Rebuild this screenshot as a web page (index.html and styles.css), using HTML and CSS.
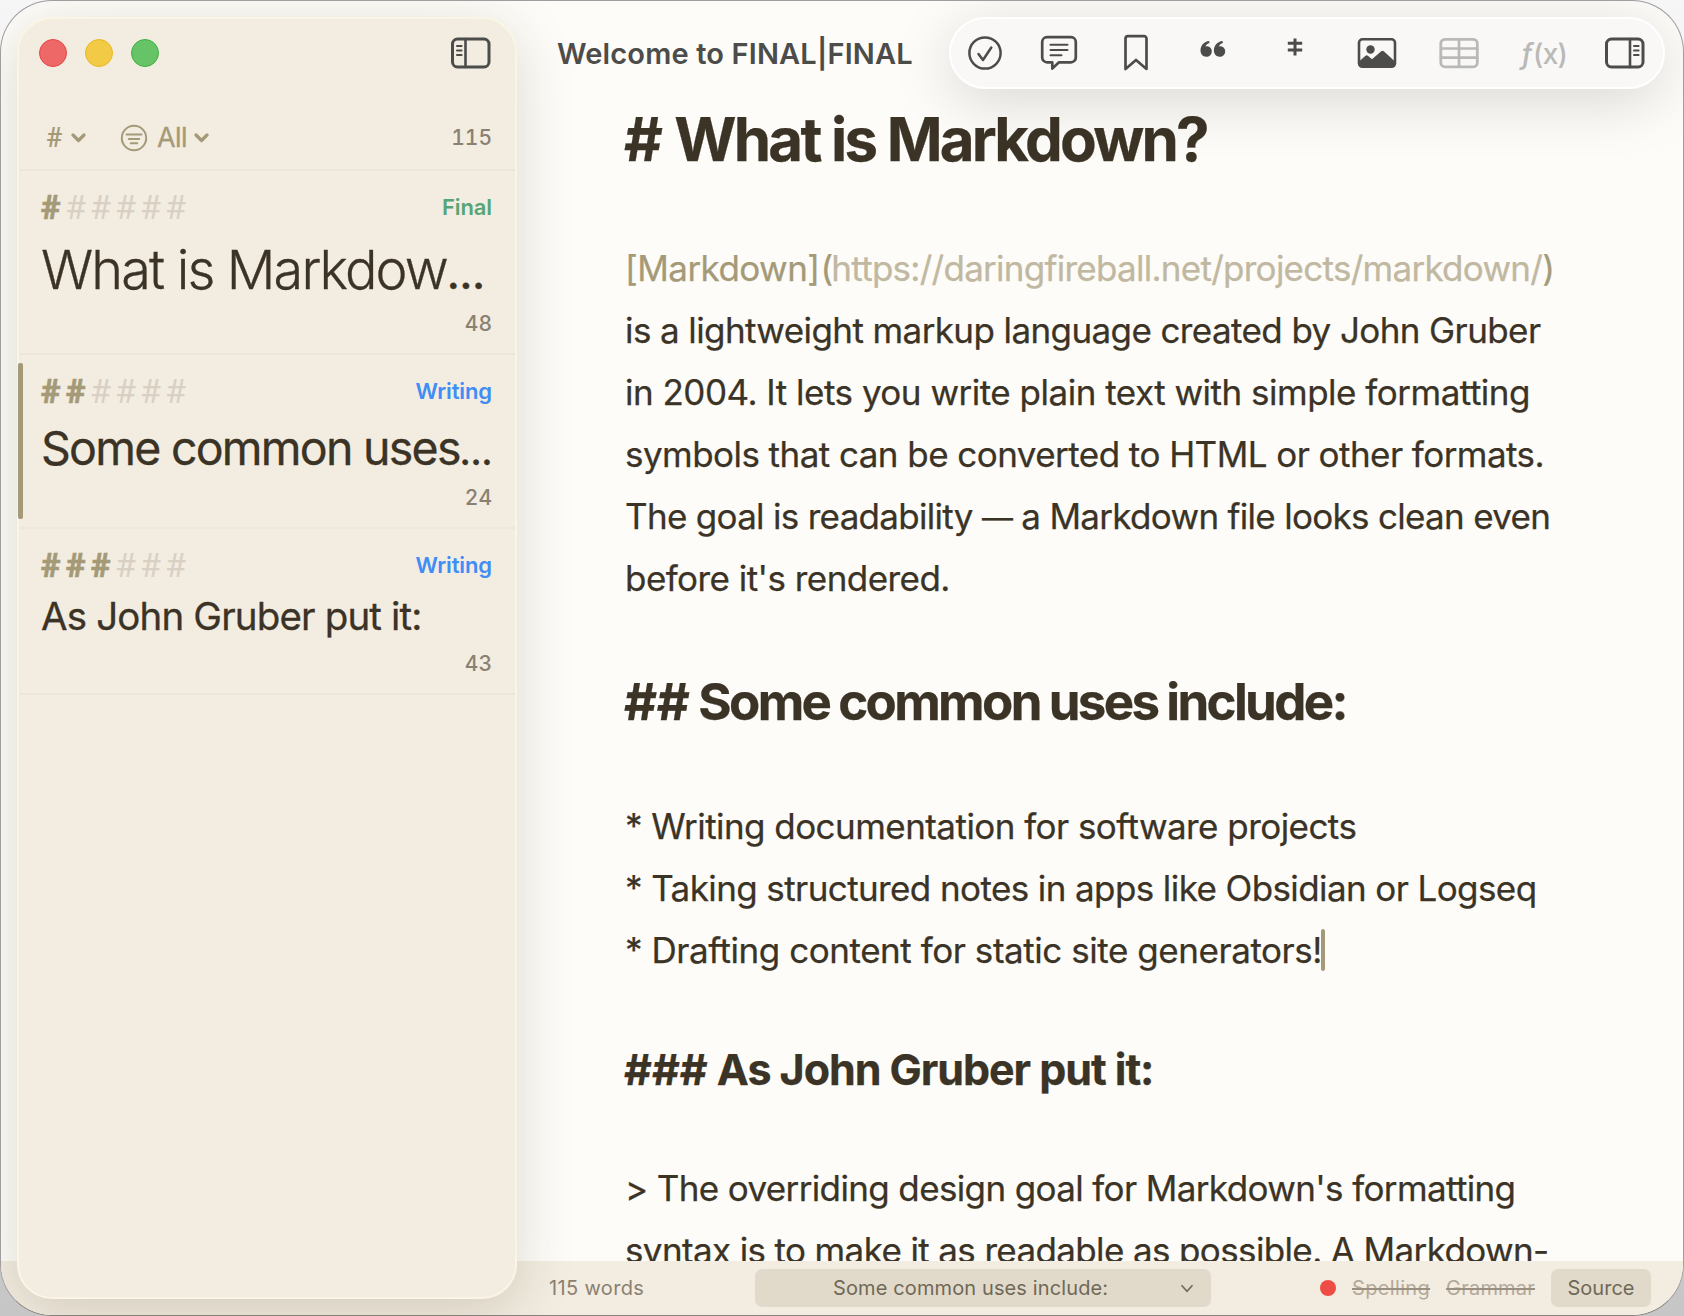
FILE: index.html
```html
<!DOCTYPE html>
<html lang="en">
<head>
    <meta charset="UTF-8">
    <meta name="viewport" content="width=device-width, initial-scale=1.0">
    <title>Welcome to FINAL|FINAL</title>
    <link rel="stylesheet" href="styles.css">
</head>
<body>
    <div class="window">

        <!-- Editor -->
        <main class="editor">
            <h1 class="heading heading-1"><span class="marks">#</span> What is Markdown?</h1>
            <div class="block">
                <div class="line l1"><span class="link-text">[Markdown]</span><span class="link-text paren">(</span><span class="link-url">https://daringfireball.net/projects/markdown/</span><span class="link-text">)</span></div>
                <div class="line l2">is a lightweight markup language created by John Gruber</div>
                <div class="line l3">in 2004. It lets you write plain text with simple formatting</div>
                <div class="line l4">symbols that can be converted to HTML or other formats.</div>
                <div class="line l5">The goal is readability <span class="dash">—</span> a Markdown file looks clean even</div>
                <div class="line l6">before it's rendered.</div>
            </div>
            <h2 class="heading heading-2"><span class="marks">##</span> Some common uses include:</h2>
            <div class="block">
                <div class="line b1">* Writing documentation for software projects</div>
                <div class="line b2">* Taking structured notes in apps like Obsidian or Logseq</div>
                <div class="line b3">* Drafting content for static site generators!<span class="cursor"></span></div>
            </div>
            <h3 class="heading heading-3"><span class="marks">###</span> As John Gruber put it:</h3>
            <div class="block">
                <div class="line q1">&gt; The overriding design goal for Markdown's formatting</div>
                <div class="line q2">syntax is to make it as readable as possible. A Markdown-</div>
            </div>
        </main>

        <!-- Status bar -->
        <footer class="statusbar">
            <span class="word-count">115 words</span>
            <button class="section-picker">
                <span class="section-name">Some common uses include:</span>
                <svg class="picker-chevron" width="14" height="9" viewBox="0 0 14 9"><path d="M1.5 1.2 7 7.4l5.5-6.2"/></svg>
            </button>
            <div class="status-right">
                <span class="status-dot"></span>
                <span class="check-off spelling">Spelling</span>
                <span class="check-off grammar">Grammar</span>
                <button class="mode-btn">Source</button>
            </div>
        </footer>

        <!-- Sidebar -->
        <aside class="sidebar">
            <div class="sidebar-top">
                <div class="traffic-lights">
                    <span class="light close"></span>
                    <span class="light minimize"></span>
                    <span class="light zoom"></span>
                </div>
                <svg class="icon" width="40" height="32" viewBox="0 0 40 32">
                    <rect x="1.5" y="2" width="36.5" height="28" rx="5" stroke-width="3"/>
                    <path d="M14.5 2v28" stroke-width="2.6"/>
                    <path d="M6 9h4.6M6 13.5h4.6M6 18h4.6" stroke-width="2"/>
                </svg>
            </div>

            <div class="filters">
                <span class="filter-hash">#</span>
                <svg class="filter-chevron" width="15" height="10" viewBox="0 0 15 10"><path d="m2 2 5.5 5.5L13 2"/></svg>
                <svg class="filter-icon" width="28" height="28" viewBox="0 0 28 28">
                    <circle cx="14" cy="14" r="12.2"/>
                    <path d="M6.5 10.5h15M8.8 15h10.4M10.8 19.3h6.4"/>
                </svg>
                <span class="filter-label">All</span>
                <svg class="filter-chevron" width="15" height="10" viewBox="0 0 15 10"><path d="m2 2 5.5 5.5L13 2"/></svg>
                <span class="count total">115</span>
            </div>

            <section class="card card-1">
                <div class="card-head">
                    <div class="level"><b>#</b><i>#</i><i>#</i><i>#</i><i>#</i><i>#</i></div>
                    <span class="status final">Final</span>
                </div>
                <div class="card-title">What is Markdow<span class="more">…</span></div>
                <div class="count">48</div>
            </section>

            <section class="card card-2 active">
                <div class="card-head">
                    <div class="level"><b>#</b><b>#</b><i>#</i><i>#</i><i>#</i><i>#</i></div>
                    <span class="status writing">Writing</span>
                </div>
                <div class="card-title">Some common uses<span class="more">…</span></div>
                <div class="count">24</div>
            </section>

            <section class="card card-3">
                <div class="card-head">
                    <div class="level"><b>#</b><b>#</b><b>#</b><i>#</i><i>#</i><i>#</i></div>
                    <span class="status writing">Writing</span>
                </div>
                <div class="card-title">As John Gruber put it:</div>
                <div class="count">43</div>
            </section>
        </aside>

        <!-- Title and floating toolbar -->
        <header class="titlebar">
            <span class="doc-title">Welcome to FINAL|FINAL</span>
            <nav class="toolbar">
                <svg class="icon" width="36" height="36" viewBox="0 0 36 36">
                    <circle cx="18" cy="18" r="15.6" stroke-width="2.5"/>
                    <path d="m11.5 19 4.5 6 8.3-12.5" stroke-width="2.5"/>
                </svg>
                <svg class="icon" width="38" height="36" viewBox="0 0 38 36">
                    <path d="M7 2.2h24a4.8 4.8 0 0 1 4.8 4.8v15.5a4.8 4.8 0 0 1-4.8 4.8H19l-6.7 6.2v-6.2H7a4.8 4.8 0 0 1-4.8-4.8V7A4.8 4.8 0 0 1 7 2.2z" stroke-width="2.7"/>
                    <path d="M10.5 9.7h17M10.5 15h17M10.5 20.3h11" stroke-width="2"/>
                </svg>
                <svg class="icon" width="26" height="38" viewBox="0 0 26 38">
                    <path d="M5 2.2h16a2.5 2.5 0 0 1 2.5 2.5V35L13 26 2.5 35V4.7A2.5 2.5 0 0 1 5 2.2z" stroke-width="2.7"/>
                </svg>
                <svg class="icon solid quote" width="28" height="18" viewBox="0 0 28 18">
                    <path d="M10.2 1C5 1.6 1.5 5.5 1.5 10.6c0 3.7 2.4 6.2 5.7 6.2 3.2 0 5.6-2.3 5.6-5.3 0-3-2.2-5.2-5-5.2-.5 0-1 .1-1.4.2.8-1.7 2.2-2.8 4.1-3.4z"/>
                    <path d="M23.6 1c-5.2.6-8.7 4.5-8.7 9.6 0 3.7 2.4 6.2 5.7 6.2 3.2 0 5.6-2.3 5.6-5.3 0-3-2.2-5.2-5-5.2-.5 0-1 .1-1.4.2.8-1.7 2.2-2.8 4.1-3.4z"/>
                </svg>
                <svg class="icon dagger" width="16" height="18" viewBox="0 0 16 18">
                    <path d="M8 .5v17M.8 5.3h14.4M.8 12h14.4" stroke-width="3"/>
                </svg>
                <svg class="icon" width="40" height="32" viewBox="0 0 40 32">
                    <rect x="2" y="2.3" width="36" height="27.5" rx="3.5" stroke-width="2.6"/>
                    <path class="fill" d="M2 24.5 8.5 18.8q1.2-1 2.4 0L15 22.3l9.2-8q1.3-1 2.6 0L38 24.5V28q0 2-2 2H4q-2 0-2-2z"/>
                    <circle class="fill" cx="13.5" cy="12.5" r="4.2"/>
                </svg>
                <svg class="icon disabled" width="40" height="32" viewBox="0 0 40 32">
                    <rect x="1.8" y="2.3" width="36.5" height="27.5" rx="4" stroke-width="2.8"/>
                    <path d="M2 11.5h36M2 20.7h36M20 2.5v27" stroke-width="2.7"/>
                </svg>
                <span class="formula"><span class="fn">ƒ</span>(x)</span>
                <svg class="icon" width="40" height="32" viewBox="0 0 40 32">
                    <rect x="1.5" y="2" width="36.5" height="28" rx="5" stroke-width="3"/>
                    <path d="M25 2v28" stroke-width="2.6"/>
                    <path d="M29 9h4.6M29 13.5h4.6M29 18h4.6" stroke-width="2"/>
                </svg>
            </nav>
        </header>
    </div>
</body>
</html>
```
FILE: styles.css
```css
/* ==========================================================================
   VARIABLES
   ========================================================================== */
:root {
    --paper: #fdfcf8;
    --panel: #f3ece0;
    --panel-line: #eee6da;
    --control: #e1dacb;
    --ink: #3b3326;
    --ink-soft: #8a8172;
    --accent: #a59a78;
    --accent-soft: #c1b8a1;
    --icon: #4c4c4b;
    --green: #57a576;
    --blue: #3f8df5;
}

* { box-sizing: border-box; }

body {
    margin: 0;
    height: 1316px;
    overflow: hidden;
    font-family: Inter, "Liberation Sans", sans-serif;
    color: var(--ink);
    background: linear-gradient(#f6f6f6, #c6c6c6);
}

h1, h2, h3 { margin: 0; }

button {
    border: none;
    font-family: inherit;
    padding: 0;
}

.window {
    position: relative;
    display: flex;
    flex-direction: column;
    height: 1316px;
    overflow: hidden;
    border: 1px solid #a09da0;
    border-bottom-color: #85827b;
    border-radius: 52px;
    background: var(--paper);
}

/* ==========================================================================
   EDITOR
   ========================================================================== */
.editor {
    flex: 1;
    min-height: 0;
    overflow: hidden;
    padding: 102px 100px 0 624px;
    font-size: 35px;
    line-height: 62px;
    white-space: nowrap;
    -webkit-text-stroke: 0.25px currentColor;
}

.heading { font-weight: 650; margin-left: -1px; }
.heading-1 { font-size: 60px; line-height: 72px; letter-spacing: -2.8px; }
.heading-2 { font-size: 51px; line-height: 62px; letter-spacing: -2.65px; word-spacing: -0.5px; }
.heading-3 { font-size: 43px; line-height: 52px; letter-spacing: -1.05px; }
.heading-1 .marks { letter-spacing: 0; }
.heading-2 .marks { letter-spacing: -0.4px; }
.heading-3 .marks { letter-spacing: 0; }

.block { margin: 62px 0; }

.line { letter-spacing: -0.55px; }
.l1 .paren { margin-left: 1px; letter-spacing: -2px; }
.l1 .link-url { letter-spacing: -0.73px; }
.l2 { letter-spacing: -0.6px; }
.l3 { letter-spacing: -0.5px; }
.l5 { letter-spacing: -0.7px; }
.b2 { letter-spacing: -0.6px; }
.b3 { letter-spacing: -0.45px; }
.q1, .q2 { letter-spacing: -0.63px; }
.dash { font-size: 31px; line-height: 1; }

.link-text { color: var(--accent); }
.link-url { color: var(--accent-soft); }

.cursor {
    display: inline-block;
    width: 4px;
    height: 42px;
    margin-left: -1px;
    border-radius: 2px;
    background: var(--accent);
    vertical-align: -8px;
}

/* ==========================================================================
   STATUS BAR
   ========================================================================== */
.statusbar {
    display: flex;
    align-items: center;
    flex: none;
    height: 54px;
    padding: 0 32px 0 548px;
    background: var(--panel);
    font-size: 20px;
    color: var(--ink-soft);
}

.word-count { width: 206px; letter-spacing: 0.35px; }

.section-picker {
    display: flex;
    align-items: center;
    width: 456px;
    height: 38px;
    padding: 0 17px 0 78px;
    border-radius: 7px;
    background: var(--control);
    color: #706856;
    font-size: 20px;
    letter-spacing: 0.12px;
}

.picker-chevron {
    margin-left: auto;
    fill: none;
    stroke: #706856;
    stroke-width: 1.6;
}

.status-right {
    display: flex;
    align-items: center;
    gap: 16px;
    margin-left: auto;
}

.status-dot {
    width: 16px;
    height: 16px;
    border-radius: 50%;
    background: #ee4d45;
}

.check-off { color: #b3a99b; text-decoration: line-through; text-decoration-color: #9a9081; }
.spelling { letter-spacing: 0.35px; }
.grammar { letter-spacing: 0.2px; }

.mode-btn {
    width: 100px;
    height: 38px;
    border-radius: 7px;
    background: var(--control);
    color: #706856;
    font-size: 20px;
}

/* ==========================================================================
   SIDEBAR
   ========================================================================== */
.sidebar {
    position: absolute;
    top: 16px;
    left: 16px;
    width: 500px;
    height: 1282px;
    border: 2px solid #faf5e5;
    border-radius: 35px;
    background: var(--panel);
    box-shadow: 0 12px 56px rgba(40, 40, 20, 0.17);
}

.sidebar-top {
    display: flex;
    align-items: center;
    justify-content: space-between;
    height: 68px;
    padding: 0 24px 0 20px;
}

.traffic-lights { display: flex; gap: 18px; }
.light { width: 28px; height: 28px; border-radius: 50%; border: 1px solid; }
.close { background: #ee6868; border-color: #e64545; }
.minimize { background: #f3ca46; border-color: #e8b820; }
.zoom { background: #66c466; border-color: #40b043; }

.filters {
    display: flex;
    align-items: center;
    height: 84px;
    padding: 19px 23px 0 27px;
    border-bottom: 2px solid var(--panel-line);
    color: var(--accent);
}

.filter-hash { width: 25px; font: 500 27px Roboto, sans-serif; }
.filter-chevron { fill: none; stroke: var(--accent); stroke-width: 3.2; stroke-linecap: round; stroke-linejoin: round; }
.filter-icon { margin-left: 34px; fill: none; stroke: var(--accent); stroke-width: 2; stroke-linecap: round; }
.filter-label { width: 37px; margin-left: 9px; font-size: 27px; letter-spacing: -0.6px; -webkit-text-stroke: 0.3px currentColor; }

.count {
    font-size: 21px;
    font-weight: 500;
    line-height: 26px;
    color: var(--ink-soft);
    text-align: right;
    font-feature-settings: "tnum";
}
.total { margin-left: auto; }

.card {
    position: relative;
    padding: 18px 23px 0 22px;
    border-bottom: 2px solid var(--panel-line);
}
.card-1 { height: 184px; }
.card-2 { height: 174px; }
.card-3 { height: 166px; }

/* marker of the section being edited */
.active::before {
    content: "";
    position: absolute;
    left: -1px;
    top: 8px;
    width: 5px;
    height: 156px;
    border-radius: 2px;
    background: var(--accent);
}

.card-head {
    display: flex;
    align-items: center;
    justify-content: space-between;
    height: 36px;
}

.level { display: flex; font: 34px Roboto, sans-serif; }
.level b, .level i { width: 25px; font-style: normal; }
.level b { font-weight: 900; color: var(--accent); -webkit-text-stroke: 0.5px var(--accent); }
.level i { font-weight: 400; color: #d8d0c3; text-indent: -1px; }

.status { font-size: 22px; font-weight: 600; letter-spacing: -0.1px; }
.final { color: var(--green); }
.writing { color: var(--blue); }

.card-title { white-space: nowrap; -webkit-text-stroke: 0.3px currentColor; }
.card-1 .card-title { font-size: 54px; font-weight: 330; line-height: 66px; margin-top: 12px; letter-spacing: -1.85px; }
.card-2 .card-title { font-size: 46.5px; font-weight: 430; line-height: 56px; margin-top: 11px; letter-spacing: -1.75px; }
.card-3 .card-title { font-size: 38.5px; font-weight: 420; line-height: 46px; margin-top: 10px; letter-spacing: -0.85px; }
.more { font-size: 0.7em; font-weight: 700; line-height: 1; }
.card-1 .count { margin-top: 8px; }
.card-2 .count { margin-top: 9px; }
.card-3 .count { margin-top: 12px; }

/* ==========================================================================
   TITLE BAR
   ========================================================================== */
.titlebar {
    position: absolute;
    top: 16px;
    left: 556px;
    right: 18px;
    display: flex;
    align-items: center;
    justify-content: space-between;
}

.doc-title {
    font-size: 29px;
    font-weight: 600;
    letter-spacing: 0.15px;
    color: var(--icon);
    white-space: nowrap;
}

.toolbar {
    display: grid;
    grid-template-columns: 68px 80px 74px 80px 84px 80px 84px 86px 76px;
    align-items: center;
    justify-items: center;
    width: 716px;
    height: 72px;
    border: 2px solid #fff;
    border-radius: 36px;
    background: #f9f8f6;
    box-shadow: 0 12px 60px rgba(0, 0, 0, 0.15);
}

.icon { fill: none; stroke: var(--icon); stroke-linecap: round; stroke-linejoin: round; }
.solid { fill: var(--icon); stroke: none; }
.fill { fill: var(--icon); stroke: none; }
.disabled { stroke: #b9b9b8; }
.quote { margin-top: -8px; }
.dagger { margin-top: -13px; stroke-linecap: butt; }
.formula { font-size: 28px; font-weight: 500; color: #b9b9b8; letter-spacing: -0.7px; }
.fn { display: inline-block; margin-right: 1px; font-style: italic; font-size: 29px; }
```
